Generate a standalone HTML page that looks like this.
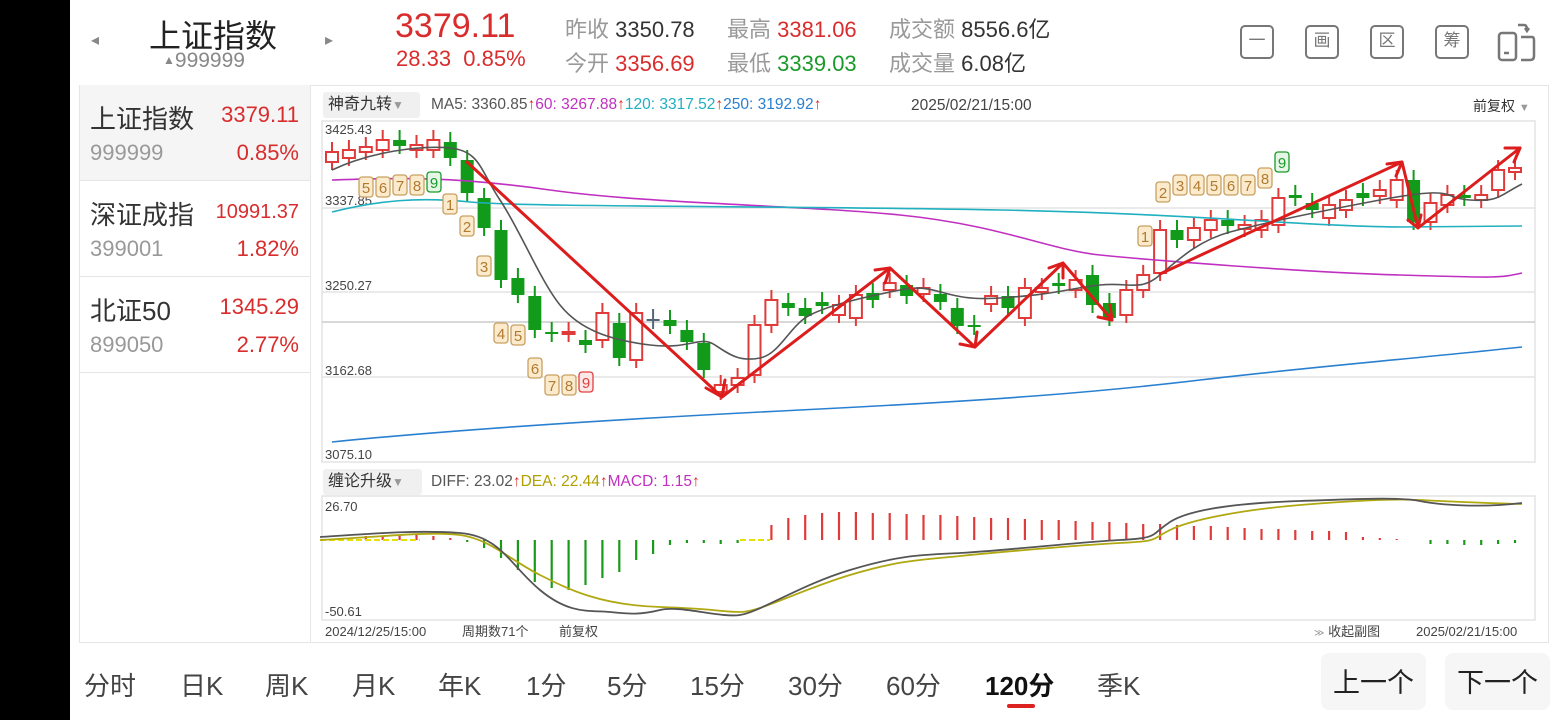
<!DOCTYPE html>
<html><head><meta charset="utf-8">
<style>
*{margin:0;padding:0;box-sizing:border-box}
body{width:1560px;height:720px;background:#fff;position:relative;overflow:hidden;font-family:"Liberation Sans","Noto Sans CJK SC",sans-serif;color:#333}
.a{position:absolute;white-space:nowrap}
.r{color:#d92d2d}.g{color:#999}.d{color:#333}.gr{color:#1a9a2a}
.ic{position:absolute;top:25px;width:34px;height:34px;border:2.5px solid #777;border-radius:5px;color:#777;font-size:17px;text-align:center;line-height:28px}
.row{position:absolute;left:80px;width:230px;border-bottom:1px solid #e6e6e6}
.row .n{position:absolute;left:10px;top:14px;font-size:26px;color:#333}
.row .v{position:absolute;right:11px;top:17px;font-size:22px;color:#d92d2d}
.row .c{position:absolute;left:10px;top:55px;font-size:22px;color:#999}
.row .p{position:absolute;right:11px;top:55px;font-size:22px;color:#d92d2d}
.tab{position:absolute;top:666px;font-size:26px;color:#444}
.btn{position:absolute;top:653px;width:105px;height:57px;background:#f6f6f6;border-radius:8px;font-size:27px;color:#222;text-align:center;line-height:60px}
</style></head><body>
<div class="a" style="left:0;top:0;width:70px;height:720px;background:#000"></div>

<div class="a g" style="left:91px;top:30px;font-size:16px;color:#888">◂</div>
<div class="a d" style="left:149px;top:11px;font-size:32px;color:#222">上证指数</div>
<div class="a g" style="left:163px;top:49px;font-size:21px;color:#888"><span style="font-size:12px;vertical-align:3px">▲</span>999999</div>
<div class="a g" style="left:325px;top:30px;font-size:16px;color:#888">▸</div>
<div class="a r" style="left:395px;top:7px;font-size:34px">3379.11</div>
<div class="a r" style="left:396px;top:46px;font-size:22px">28.33&nbsp; 0.85%</div>
<div class="a" style="left:565px;top:12px;font-size:22px"><span class="g">昨收</span> <span class="d">3350.78</span></div>
<div class="a" style="left:565px;top:46px;font-size:22px"><span class="g">今开</span> <span class="r">3356.69</span></div>
<div class="a" style="left:727px;top:12px;font-size:22px"><span class="g">最高</span> <span class="r">3381.06</span></div>
<div class="a" style="left:727px;top:46px;font-size:22px"><span class="g">最低</span> <span class="gr">3339.03</span></div>
<div class="a" style="left:889px;top:12px;font-size:22px"><span class="g">成交额</span> <span class="d">8556.6亿</span></div>
<div class="a" style="left:889px;top:46px;font-size:22px"><span class="g">成交量</span> <span class="d">6.08亿</span></div>

<div class="ic" style="left:1240px">一</div>
<div class="ic" style="left:1305px">画</div>
<div class="ic" style="left:1370px">区</div>
<div class="ic" style="left:1435px">筹</div>
<svg class="a" style="left:1496px;top:22px" width="42" height="40" viewBox="0 0 42 40" fill="none" stroke="#777" stroke-width="2.5"><rect x="3" y="11" width="17" height="27" rx="3"/><line x1="8" y1="31" x2="13" y2="31"/><path d="M22 3 H28 Q31 3 31 8"/><path d="M29 6 l2 3 2-3"/><path d="M25 15 H36 Q38 15 38 18 V34 Q38 38 34 38 H25"/></svg>

<div class="a" style="left:79px;top:85px;width:1470px;height:558px;border:1px solid #e6e6e6"></div>
<div class="row" style="top:85px;height:96px;background:#f5f5f5"><div class="n">上证指数</div><div class="v">3379.11</div><div class="c">999999</div><div class="p">0.85%</div></div>
<div class="row" style="top:181px;height:96px"><div class="n">深证成指</div><div class="v" style="font-size:20px;top:20px">10991.37</div><div class="c">399001</div><div class="p">1.82%</div></div>
<div class="row" style="top:277px;height:96px"><div class="n">北证50</div><div class="v">1345.29</div><div class="c">899050</div><div class="p">2.77%</div></div>
<div class="a" style="left:310px;top:85px;width:1px;height:558px;background:#e6e6e6"></div>

<div class="a" style="left:323px;top:92px;width:97px;height:26px;background:#f0f0f0;border-radius:3px;font-size:16px;line-height:26px;padding-left:5px;color:#333">神奇九转<span style="color:#999;font-size:12px">▼</span></div>
<div class="a" style="left:431px;top:96px;font-size:15.5px"><span style="color:#555">MA5: 3360.85</span><span class="r">↑</span><span style="color:#c030c0">60: 3267.88</span><span class="r">↑</span><span style="color:#20b0c0">120: 3317.52</span><span class="r">↑</span><span style="color:#2a80d0">250: 3192.92</span><span class="r">↑</span></div>
<div class="a" style="left:911px;top:97px;font-size:15.5px;color:#444">2025/02/21/15:00</div>
<div class="a" style="left:1473px;top:96px;font-size:14px;color:#333">前复权 <span style="color:#999;font-size:11px">▼</span></div>

<div class="a" style="left:323px;top:469px;width:99px;height:26px;background:#f0f0f0;border-radius:3px;font-size:16px;line-height:26px;padding-left:5px;color:#333">缠论升级<span style="color:#999;font-size:12px">▼</span></div>
<div class="a" style="left:431px;top:473px;font-size:15.5px"><span style="color:#555">DIFF: 23.02</span><span class="r">↑</span><span style="color:#b0a000">DEA: 22.44</span><span class="r">↑</span><span style="color:#c030c0">MACD: 1.15</span><span class="r">↑</span></div>

<svg class="a" style="left:0;top:0" width="1560" height="720" id="ch">
<g stroke="#e4e4e4" stroke-width="1.5" fill="none">
<rect x="322" y="121" width="1213" height="341"/>
<line x1="322" y1="208" x2="1535" y2="208"/>
<line x1="322" y1="292" x2="1535" y2="292"/>
<line x1="322" y1="377" x2="1535" y2="377"/>
<rect x="322" y="496" width="1213" height="124"/>
</g>
<line x1="322" y1="322" x2="1535" y2="322" stroke="#ccc" stroke-width="1.5"/>
<g font-size="13" fill="#444" font-family="Liberation Sans,sans-serif">
<text x="325" y="134">3425.43</text><text x="325" y="205">3337.85</text><text x="325" y="290">3250.27</text><text x="325" y="375">3162.68</text><text x="325" y="459">3075.10</text>
<text x="325" y="511">26.70</text><text x="325" y="616">-50.61</text>
<text x="325" y="636">2024/12/25/15:00</text><text x="462" y="636">周期数71个</text><text x="559" y="636">前复权</text>
<text x="1314" y="636"><tspan fill="#999" font-size="10">≫</tspan> 收起副图</text><text x="1416" y="636">2025/02/21/15:00</text>
</g>
<g id="cd"></g>
<g fill="none" stroke-width="1.6">
<path stroke="#c030c0" d="M332 180 C400 178 450 176 550 190 S800 205 900 215 S1050 250 1100 255 S1300 272 1400 275 S1500 278 1522 273"/>
<path stroke="#20b0c0" d="M332 212 C380 200 420 197 470 202 S800 206 1000 210 S1300 226 1400 227 L1522 226"/>
<path stroke="#2a80d0" d="M332 442 C450 430 600 420 800 410 S1100 392 1200 380 S1400 360 1522 347"/>
<path stroke="#555" d="M332 170 C370 152 420 145 450 148 S480 170 500 200 S540 280 560 305 S610 340 650 345 S700 335 715 345 S740 362 760 358 S790 325 810 315 S860 298 900 290 S940 302 1000 298 S1070 288 1100 285 S1140 292 1160 275 S1200 240 1230 232 S1300 215 1380 200 S1440 198 1470 200 S1500 195 1522 184"/>
</g>
<g id="td"></g>
<g stroke="#dd1c1c" stroke-width="3" fill="none" stroke-linecap="round" stroke-linejoin="round">
<path d="M467 162 L722 397 L890 268 L975 347 L1063 263 L1112 320"/>
<path d="M1160 274 L1402 162 L1418 228 L1520 148"/>
<path d="M706 388 L722 397 L725 380"/><path d="M875 270 L890 268 L885 283"/><path d="M960 344 L975 347 L977 332"/><path d="M1049 268 L1063 263 L1063 278"/><path d="M1098 317 L1112 320 L1110 305"/><path d="M1387 164 L1402 162 L1396 176"/><path d="M1408 220 L1418 228 L1421 215"/><path d="M1505 148 L1520 148 L1514 162"/>
</g>
<g id="mc"></g>
<g fill="none" stroke-width="1.8">
<path stroke="#b0a810" d="M320 540 C380 537 430 531 460 535 S510 560 540 575 S600 605 660 607 S720 612 740 612 S800 590 850 575 S920 560 960 556 S1080 545 1120 543 S1150 540 1170 530 S1240 510 1300 505 S1400 499 1420 500 S1480 503 1522 504"/>
<path stroke="#555" d="M320 537 C380 533 420 530 460 533 S510 565 540 590 S590 610 610 612 S640 615 660 610 S720 618 740 615 S800 585 850 570 S920 555 960 553 S1080 542 1120 540 S1150 535 1170 522 S1240 503 1300 501 S1400 497 1420 501 S1480 508 1522 503"/>
</g>
</svg>

<div class="tab" style="left:84px">分时</div>
<div class="tab" style="left:180px">日K</div>
<div class="tab" style="left:265px">周K</div>
<div class="tab" style="left:352px">月K</div>
<div class="tab" style="left:438px">年K</div>
<div class="tab" style="left:526px">1分</div>
<div class="tab" style="left:607px">5分</div>
<div class="tab" style="left:690px">15分</div>
<div class="tab" style="left:788px">30分</div>
<div class="tab" style="left:886px">60分</div>
<div class="tab" style="left:985px;color:#111;font-weight:bold">120分</div>
<div class="a" style="left:1007px;top:704px;width:28px;height:4px;background:#dd2222;border-radius:2px"></div>
<div class="tab" style="left:1097px">季K</div>
<div class="btn" style="left:1321px">上一个</div>
<div class="btn" style="left:1445px">下一个</div>

<script>
var NS="http://www.w3.org/2000/svg";
function el(p,t,a){var e=document.createElementNS(NS,t);for(var k in a)e.setAttribute(k,a[k]);p.appendChild(e);return e;}
var C=[[152,162,'r'],[150,158,'r'],[147,152,'r'],[140,150,'r'],[140,146,'g'],[145,150,'r'],[140,150,'r'],[142,158,'g'],[160,193,'g'],[198,228,'g'],[230,280,'g'],[278,295,'g'],[296,330,'g'],[332,334,'g'],[332,334,'r'],[340,345,'g'],[313,340,'r'],[323,358,'g'],[313,360,'r'],[319,321,'k'],[320,326,'g'],[330,342,'g'],[343,370,'g'],[385,392,'r'],[378,385,'r'],[325,375,'r'],[300,325,'r'],[303,308,'g'],[308,316,'g'],[302,306,'g'],[305,315,'r'],[295,318,'r'],[293,300,'g'],[283,290,'r'],[285,296,'g'],[288,294,'r'],[294,302,'g'],[308,326,'g'],[325,327,'g'],[296,304,'r'],[296,308,'g'],[288,318,'r'],[288,292,'r'],[283,286,'g'],[280,290,'r'],[275,305,'g'],[303,318,'g'],[290,315,'r'],[275,290,'r'],[230,273,'r'],[230,240,'g'],[228,240,'r'],[220,230,'r'],[220,226,'g'],[225,229,'r'],[220,230,'r'],[198,225,'r'],[195,198,'g'],[203,210,'g'],[205,218,'r'],[200,210,'r'],[193,198,'g'],[190,196,'r'],[180,200,'r'],[180,222,'g'],[203,222,'r'],[195,205,'r'],[195,198,'g'],[195,200,'r'],[170,190,'r'],[168,172,'r']];
var cd=document.getElementById('cd');
C.forEach(function(c,i){var x=332+i*16.9;var col=c[2]=='r'?'#e03a3a':c[2]=='g'?'#129a1a':'#567';
el(cd,'line',{x1:x,x2:x,y1:c[0]-10,y2:c[1]+8,stroke:col,'stroke-width':2});
if(c[2]=='r')el(cd,'rect',{x:x-6,y:c[0],width:12,height:Math.max(2,c[1]-c[0]),fill:'#fff',stroke:col,'stroke-width':2});
else el(cd,'rect',{x:x-6.5,y:c[0],width:13,height:Math.max(2,c[1]-c[0]),fill:col});});
var T=[[366,187,'5'],[383,187,'6'],[400,185,'7'],[417,185,'8'],[434,182,'9','g'],[450,204,'1'],[467,226,'2'],[484,266,'3'],[501,333,'4'],[518,335,'5'],[535,368,'6'],[552,385,'7'],[569,385,'8'],[586,382,'9','r'],[1145,236,'1'],[1163,192,'2'],[1180,185,'3'],[1197,185,'4'],[1214,185,'5'],[1231,185,'6'],[1248,185,'7'],[1265,178,'8'],[1282,162,'9','g']];
var td=document.getElementById('td');
T.forEach(function(t){var st=t[3]=='g'?'#1a9a2a':t[3]=='r'?'#e04040':'#c8a060',fl=t[3]=='g'?'#e6f6e6':t[3]=='r'?'#fde8e8':'#fbeacc',tc=t[3]=='g'?'#1a9a2a':t[3]=='r'?'#e04040':'#b07a30';
el(td,'rect',{x:t[0]-7,y:t[1]-10,width:14,height:20,rx:3,fill:fl,stroke:st,'stroke-width':1.3});
var tx=el(td,'text',{x:t[0],y:t[1]+6,'text-anchor':'middle','font-size':15,fill:tc,'font-family':'Liberation Sans,sans-serif'});tx.textContent=t[2];});
var mc=document.getElementById('mc');
var H=[-3,-3,-4,-4,-5,-5,-4,-2,2,8,18,30,42,48,50,45,38,32,20,14,5,3,3,4,3,0];
H.push(-15,-22,-25,-27,-28);
for(var i=31;i<=60;i++)H.push(-Math.round(28-(i-31)*20/29));
H.push(-3,-2,-1,0,4,4,5,5,4,3);
H.forEach(function(h,i){var x=332+i*16.9;if(i<2||h==0)return;var col=h<0?'#e03a3a':'#1a9a1a';el(mc,'line',{x1:x,x2:x,y1:540,y2:540+h,stroke:col,'stroke-width':2.2});});
el(mc,'line',{x1:320,x2:420,y1:540,y2:540,stroke:'#e8e000','stroke-width':2,'stroke-dasharray':'6 3'});
el(mc,'line',{x1:740,x2:770,y1:540,y2:540,stroke:'#e8e000','stroke-width':2,'stroke-dasharray':'6 3'});
</script>
</body></html>
